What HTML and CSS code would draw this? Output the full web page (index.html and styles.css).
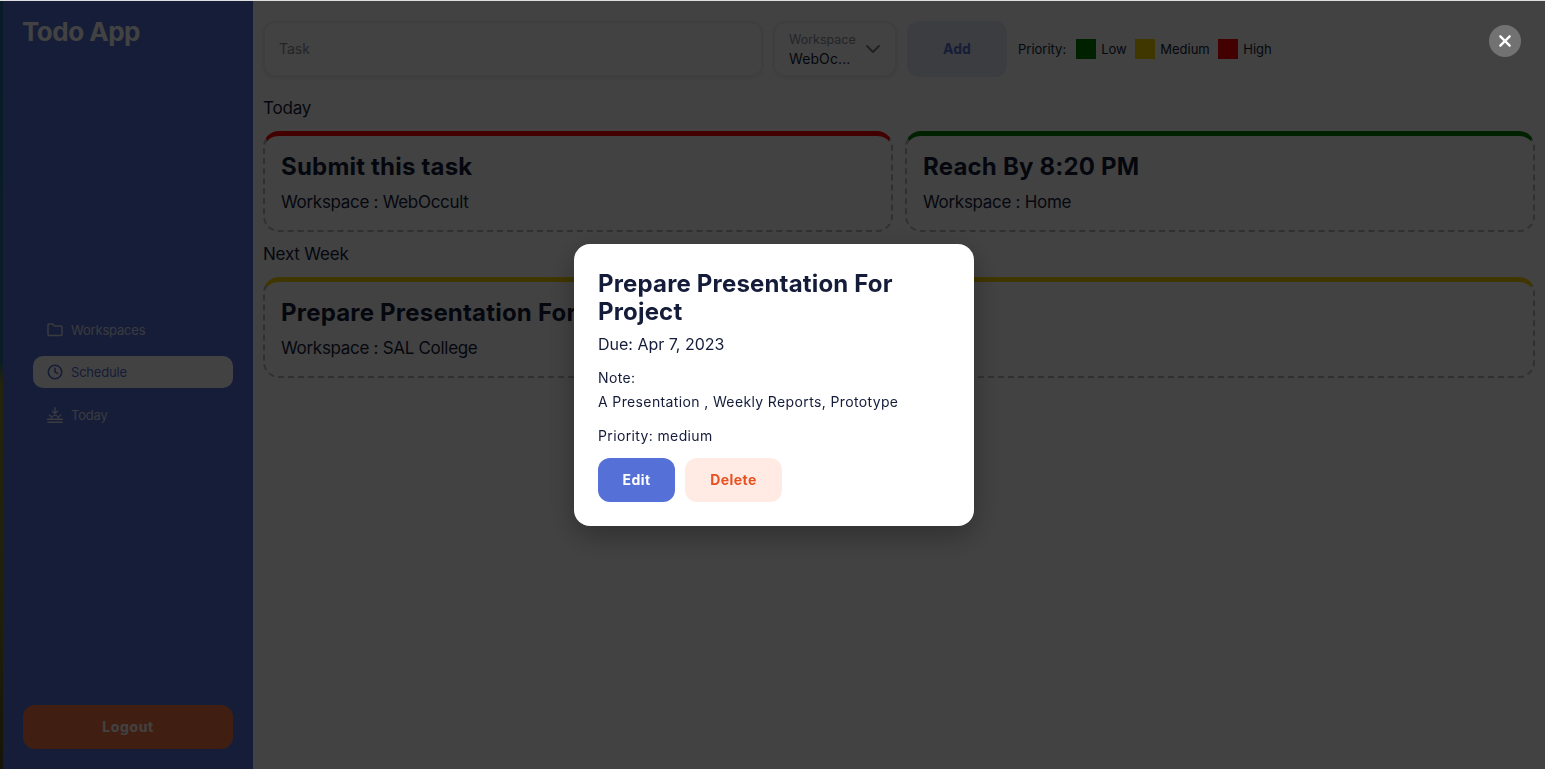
FILE: index.html
```html
<!DOCTYPE html>
<html lang="en">
<head>
    <meta charset="UTF-8">
    <meta name="viewport" content="width=device-width, initial-scale=1.0">
    <title>Todo App</title>
    <link rel="stylesheet" href="styles.css">
</head>
<body>
    <div class="app">
        <!-- Sidebar -->
        <aside class="sidebar">
            <h1 class="logo">Todo App</h1>
            <nav class="nav">
                <a class="nav-item">
                    <svg class="nav-icon" viewBox="0 0 16 16" fill="none" stroke="currentColor" stroke-width="1.5" stroke-linejoin="round"><path d="M1 3c0-.6.4-1 1-1h3.8l1.6 2h6.6c.6 0 1 .4 1 1v7.6c0 .6-.4 1-1 1H2c-.6 0-1-.4-1-1z"/></svg>
                    Workspaces
                </a>
                <a class="nav-item active">
                    <svg class="nav-icon" viewBox="0 0 16 16" fill="none" stroke="currentColor" stroke-width="1.6" stroke-linecap="round" stroke-linejoin="round"><circle cx="8" cy="8" r="6.7"/><path d="M8 4.2V8l2.6 1.4"/></svg>
                    Schedule
                </a>
                <a class="nav-item">
                    <svg class="nav-icon" viewBox="0 0 16 16" fill="none" stroke="currentColor" stroke-width="1.4" stroke-linecap="round" stroke-linejoin="round"><path d="M8 .8v5.6M5.6 4.2 8 6.6l2.4-2.4M4.4 12a3.6 3.6 0 0 1 7.2 0M.6 12.2h14.8M.8 15.2h14.4M2.4 8.2l1.3 1M13.6 8.2l-1.3 1"/></svg>
                    Today
                </a>
            </nav>
            <button class="logout">Logout</button>
        </aside>

        <!-- Main content -->
        <main class="main">
            <form class="task-form">
                <input class="task-input" type="text" placeholder="Task">
                <div class="workspace-select">
                    <div class="select-text">
                        <span class="select-label">Workspace</span>
                        <span class="select-value">WebOc...</span>
                    </div>
                    <svg class="chevron" viewBox="0 0 16 10" fill="none" stroke="currentColor" stroke-width="1.8" stroke-linecap="round" stroke-linejoin="round"><path d="M2 2l6 6 6-6"/></svg>
                </div>
                <button class="add-btn" type="button">Add</button>
                <div class="legend">
                    <span class="legend-title">Priority:</span>
                    <span class="swatch swatch-low"></span><span class="legend-name">Low</span>
                    <span class="swatch swatch-medium"></span><span class="legend-name">Medium</span>
                    <span class="swatch swatch-high"></span><span class="legend-name">High</span>
                </div>
            </form>

            <h2 class="section-title">Today</h2>
            <div class="task-grid">
                <div class="task-card high">
                    <h3>Submit this task</h3>
                    <p>Workspace : WebOccult</p>
                </div>
                <div class="task-card low">
                    <h3>Reach By 8:20 PM</h3>
                    <p>Workspace : Home</p>
                </div>
            </div>

            <h2 class="section-title">Next Week</h2>
            <div class="task-grid">
                <div class="task-card medium">
                    <h3>Prepare Presentation For Project</h3>
                    <p>Workspace : SAL College</p>
                </div>
            </div>
        </main>
    </div>

    <!-- Task popup -->
    <div class="overlay">
        <button class="close-btn" aria-label="Close">
            <svg viewBox="0 0 12 12" fill="none" stroke="currentColor" stroke-width="2" stroke-linecap="round"><path d="M2 2l8 8M10 2l-8 8"/></svg>
        </button>
        <div class="modal">
            <h2 class="modal-title">Prepare Presentation For Project</h2>
            <p class="modal-due">Due: Apr 7, 2023</p>
            <p class="modal-label">Note:</p>
            <p class="modal-note">A Presentation , Weekly Reports, Prototype</p>
            <p class="modal-priority">Priority: medium</p>
            <div class="modal-actions">
                <button class="edit-btn">Edit</button>
                <button class="delete-btn">Delete</button>
            </div>
        </div>
    </div>
</body>
</html>
```

FILE: styles.css
```css
* {
    box-sizing: border-box;
}

html, body {
    height: 100%;
}

body {
    margin: 0;
    padding: 0 0 0 3px;
    font-family: Inter, "Noto Sans", sans-serif;
    color: #141c3a;
    overflow: hidden;
    background: linear-gradient(180deg, #1b6a9a 0%, #2a6f96 47%, #8d8a30 50%, #7d7a28 80%, #55501c 100%);
    border-top: 1px solid #dedede;
}

.app {
    display: flex;
    height: 100%;
    background: white;
}

/* Sidebar */
.sidebar {
    width: 250px;
    flex-shrink: 0;
    display: flex;
    flex-direction: column;
    padding: 15px 20px 20px;
    background: #5570d6;
    color: white;
}

.logo {
    margin: 0 0 0 -1px;
    font-size: 26px;
    line-height: 32px;
    font-weight: 700;
    letter-spacing: -0.5px;
}

.nav {
    flex: 1;
    display: flex;
    flex-direction: column;
    justify-content: center;
    gap: 10.5px;
    padding: 0 0 13px 10px;
    margin-top: 4px;
}

.nav-item {
    display: flex;
    align-items: center;
    gap: 8px;
    height: 32px;
    padding: 0 14px;
    border-radius: 10px;
    font-size: 13px;
    letter-spacing: -0.2px;
    color: rgba(255, 255, 255, 0.8);
}

.nav-item.active {
    background: white;
    color: #5570d6;
}

.nav-icon {
    width: 16px;
    height: 16px;
    flex-shrink: 0;
}

.logout {
    height: 44px;
    padding-bottom: 3px;
    border: none;
    border-radius: 12px;
    background: #f57a48;
    color: white;
    font-family: inherit;
    font-size: 14px;
    font-weight: 700;
    letter-spacing: 0.6px;
}

/* Main */
.main {
    flex: 1;
    padding: 20px 10px;
    min-width: 0;
}

.task-form {
    display: flex;
    align-items: center;
    gap: 10px;
    margin-bottom: 21px;
}

.task-input {
    width: 500px;
    height: 56px;
    padding: 0 14px 2px;
    border: 2px solid #efefef;
    border-radius: 12px;
    box-shadow: 0 1px 4px rgba(0, 0, 0, 0.08);
    font-family: inherit;
    font-size: 14px;
    background: white;
}

.task-input::placeholder {
    color: #8a8f9c;
}

.workspace-select {
    width: 124px;
    height: 56px;
    display: flex;
    align-items: center;
    justify-content: space-between;
    padding: 0 14px;
    border: 2px solid #efefef;
    border-radius: 12px;
    box-shadow: 0 1px 4px rgba(0, 0, 0, 0.08);
}

.select-text {
    display: flex;
    flex-direction: column;
    padding-top: 2px;
}

.select-label {
    font-size: 12.5px;
    line-height: 18px;
    color: #8a8f9c;
}

.select-value {
    font-size: 14px;
    line-height: 20px;
    letter-spacing: 0.1px;
}

.chevron {
    width: 16px;
    height: 10px;
    color: #777;
}

.add-btn {
    width: 100px;
    height: 56px;
    padding-bottom: 3px;
    border: none;
    border-radius: 12px;
    background: #e9ecf7;
    color: #5570d6;
    font-family: inherit;
    font-size: 14px;
    font-weight: 700;
}

.legend {
    display: flex;
    align-items: center;
    padding-left: 1px;
    font-size: 13px;
}

.swatch {
    width: 20px;
    height: 20px;
    margin-right: 5px;
}

.legend-title {
    margin-right: 10px;
}

.legend-name {
    margin-right: 8.5px;
}

.swatch-low {
    background: green;
}

.swatch-medium {
    background: #f5d000;
}

.swatch-high {
    background: red;
}

.section-title {
    margin: 0 0 13px;
    font-size: 17px;
    line-height: 20px;
    font-weight: 400;
    letter-spacing: -0.2px;
}

.task-grid {
    display: grid;
    grid-template-columns: repeat(auto-fit, minmax(500px, 1fr));
    gap: 12px;
    margin-bottom: 12px;
}

.task-card {
    height: 101px;
    padding: 15px 16px;
    border: 2px dashed #bbb;
    border-top: 5px solid;
    border-radius: 16px;
}

.task-card.high {
    border-top-color: red;
}

.task-card.medium {
    border-top-color: #f5d000;
}

.task-card.low {
    border-top-color: green;
}

.task-card h3 {
    margin: 0 0 7px;
    font-size: 24px;
    line-height: 32px;
    font-weight: 700;
    letter-spacing: 0.2px;
}

.task-card p {
    margin: 0;
    font-size: 17px;
    line-height: 24px;
    letter-spacing: -0.3px;
}

/* Popup */
.overlay {
    position: fixed;
    top: 1px;
    left: 0;
    right: 0;
    bottom: 0;
    display: flex;
    align-items: center;
    justify-content: center;
    padding-left: 3px;
    background: rgba(0, 0, 0, 0.74);
}

.close-btn {
    position: absolute;
    top: 24px;
    right: 24px;
    width: 32px;
    height: 32px;
    padding: 9px;
    border: none;
    border-radius: 50%;
    background: rgba(255, 255, 255, 0.25);
    color: white;
}

.close-btn svg {
    display: block;
}

.modal {
    width: 400px;
    padding: 24px;
    background: white;
    border-radius: 16px;
    box-shadow: 0 10px 30px rgba(0, 0, 0, 0.3);
}

.modal-title {
    margin: 2px 0 6px;
    font-size: 24px;
    line-height: 28px;
    font-weight: 700;
    letter-spacing: 0.17px;
}

.modal-due {
    margin: 0 0 10px;
    font-size: 16px;
    line-height: 24px;
}

.modal-label,
.modal-note,
.modal-priority {
    margin: 0;
    font-size: 14px;
    line-height: 24px;
    letter-spacing: 0.37px;
}

.modal-note {
    margin-bottom: 10px;
}

.modal-actions {
    display: flex;
    gap: 10px;
    margin-top: 10px;
}

.edit-btn,
.delete-btn {
    height: 44px;
    padding-bottom: 2px;
    border: none;
    border-radius: 12px;
    font-family: inherit;
    font-size: 14px;
    font-weight: 700;
    letter-spacing: 0.4px;
}

.edit-btn {
    width: 77px;
    background: #5570d6;
    color: white;
}

.delete-btn {
    width: 97px;
    background: #ffebe4;
    color: #e8501f;
}
```
